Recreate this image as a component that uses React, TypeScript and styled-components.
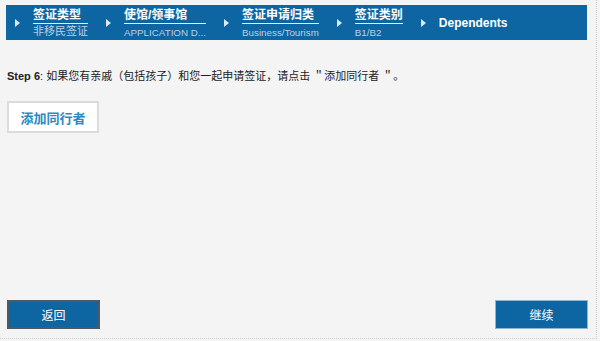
import styled, { createGlobalStyle } from "styled-components";

const GlobalStyle = createGlobalStyle`
	body {
		margin: 0;
		background: #f4f4f4;
		font-family: "Liberation Sans", "Noto Sans CJK SC", Arial, sans-serif;
	}
`;

const Page = styled.div`
	box-sizing: border-box;
	width: 597px;
	height: 339px;
	border-right: 1px dotted #cfcfcf;
	border-bottom: 1px dotted #cfcfcf;
	padding: 5px 0 9px 6px;
	display: flex;
	flex-direction: column;
`;

const StepBar = styled.div`
	box-sizing: border-box;
	width: 581px;
	height: 35px;
	background: #0d66a1;
	display: flex;
	align-items: flex-start;
	padding-left: 9px;
`;

const Step = styled.div`
	display: flex;
	align-items: center;
	height: 35px;
	margin-right: 18px;
`;

const Arrow = styled.span`
	width: 0;
	height: 0;
	border-top: 4px solid transparent;
	border-bottom: 4px solid transparent;
	border-left: 5px solid #dfe9f2;
	margin-right: 13px;
`;

const StepText = styled.div`
	display: flex;
	flex-direction: column;
	align-self: flex-start;
	padding-top: 3px;
`;

const StepTitle = styled.div`
	color: #fff;
	font-weight: bold;
	font-size: 12px;
	line-height: 15px;
	white-space: nowrap;
`;

const StepSub = styled.div<{ $big?: boolean }>`
	border-top: 1px solid #e8eef4;
	color: #bcd0e2;
	font-size: ${(p) => (p.$big ? "11px" : "9.8px")};
	line-height: ${(p) => (p.$big ? "14px" : "13px")};
	padding-top: ${(p) => (p.$big ? "0" : "2px")};
	white-space: nowrap;
`;

const Current = styled.div`
	color: #fff;
	font-weight: bold;
	font-size: 12px;
`;

const Intro = styled.p`
	margin: 29px 0 0 1px;
	font-size: 11px;
	line-height: 14px;
	color: #222;
	b {
		font-weight: bold;
	}
`;

const AddButton = styled.button`
	box-sizing: border-box;
	width: 92px;
	height: 32px;
	margin: 18px 0 0 1px;
	background: #fff;
	border: 2px solid #dcdcdc;
	color: #2a8ac2;
	font-family: "Noto Sans CJK SC", sans-serif;
	font-weight: bold;
	font-size: 13px;
	cursor: pointer;
`;

const Footer = styled.div`
	margin-top: auto;
	display: flex;
	justify-content: space-between;
	width: 581px;
	padding-left: 1px;
`;

const NavButton = styled.button<{ $dark?: boolean }>`
	box-sizing: border-box;
	width: 93px;
	height: 29px;
	background: #0d66a1;
	border: ${(p) => (p.$dark ? "2px solid #4d5a66" : "1px solid #8fb6d2")};
	color: #fff;
	font-family: "Noto Sans CJK SC", sans-serif;
	font-size: 12px;
	cursor: pointer;
`;

const steps = [
	{ title: "签证类型", sub: "非移民签证", big: true },
	{ title: "使馆/领事馆", sub: "APPLICATION D..." },
	{ title: "签证申请归类", sub: "Business/Tourism" },
	{ title: "签证类别", sub: "B1/B2" },
];

export default function App() {
	return (
		<>
			<GlobalStyle />
			<Page>
				<StepBar>
					{steps.map((s) => (
						<Step key={s.title}>
							<Arrow />
							<StepText>
								<StepTitle>{s.title}</StepTitle>
								<StepSub $big={s.big}>{s.sub}</StepSub>
							</StepText>
						</Step>
					))}
					<Step>
						<Arrow />
						<Current>Dependents</Current>
					</Step>
				</StepBar>
				<Intro>
					<b>Step 6</b>: 如果您有亲戚（包括孩子）和您一起申请签证，请点击 ＂添加同行者 ＂。
				</Intro>
				<div>
					<AddButton>添加同行者</AddButton>
				</div>
				<Footer>
					<NavButton $dark>返回</NavButton>
					<NavButton>继续</NavButton>
				</Footer>
			</Page>
		</>
	);
}
